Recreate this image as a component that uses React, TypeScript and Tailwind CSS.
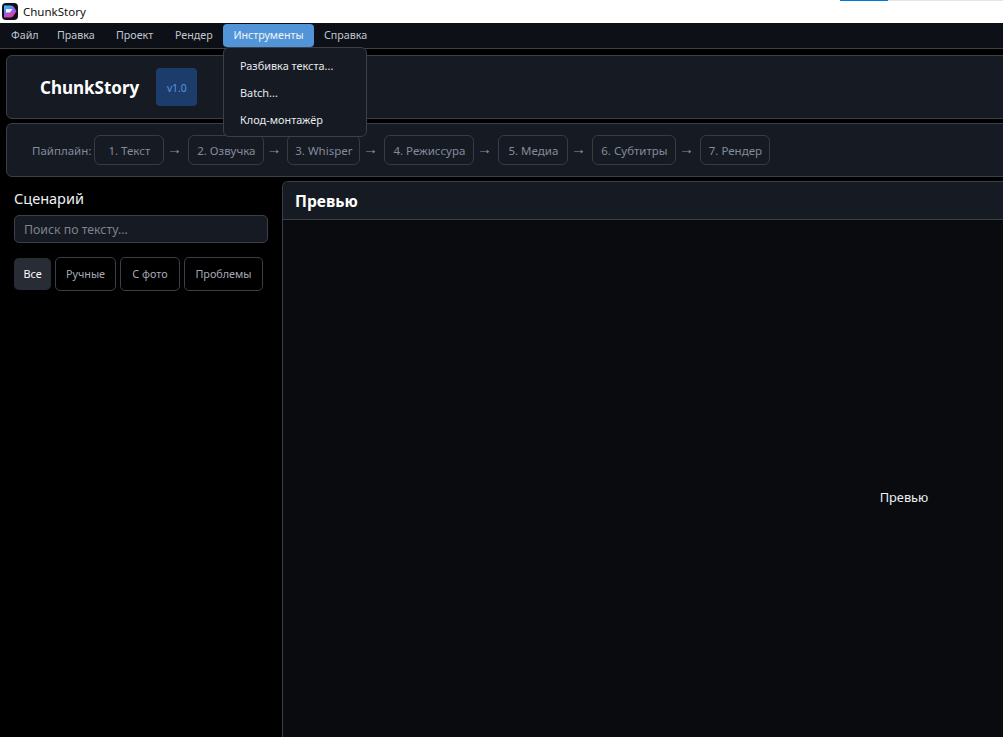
import React from "react";

const menus = [
  { label: "Файл", width: "w-[46px]" },
  { label: "Правка", width: "w-[59px]" },
  { label: "Проект", width: "w-[59px]" },
  { label: "Рендер", width: "w-[58px]" },
];
const steps = ["1. Текст", "2. Озвучка", "3. Whisper", "4. Режиссура", "5. Медиа", "6. Субтитры", "7. Рендер"];
const stepWidths = ["w-[70px]", "w-[76px]", "w-[73px]", "w-[90px]", "w-[70px]", "w-[84px]", "w-[70px]"];
const arrowWidths = ["w-[24px]", "w-[23px]", "w-[24px]", "w-[24px]", "w-[24px]", "w-[24px]"];

function Logo() {
  return (
    <svg width="16" height="17" viewBox="0 0 16 17" className="shrink-0">
      <defs>
        <linearGradient id="lg" x1="0" y1="0" x2="0.5" y2="1">
          <stop offset="0" stopColor="#22d3ee" />
          <stop offset="0.5" stopColor="#7c6cf5" />
          <stop offset="1" stopColor="#f0369a" />
        </linearGradient>
      </defs>
      <rect x="0" y="0" width="16" height="17" rx="4" fill="#0f111a" />
      <path d="M2 2.5h6.5c1.7 0 2.9.8 3.8 2.1l2.2 3.7-2.7 4c-.9 1.4-2.1 2.2-3.6 2.2H2z" fill="url(#lg)" />
      <path d="M4 6h6.5l-2.5 3.4H4z" fill="#e8f6ff" />
    </svg>
  );
}

export default function App() {
  return (
    <div className="relative w-[1003px] h-[737px] overflow-hidden bg-black font-['Noto_Sans','Open_Sans',sans-serif]">
      <div className="absolute top-0 left-[840px] w-[48px] h-px bg-[#0078d7]" />
      <div className="absolute top-0 left-[888px] w-[115px] h-px bg-[#e5e5e5]" />
      <div className="w-[1532px] h-[776px] flex flex-col">
        <div className="h-[23px] bg-white flex items-center pl-[2px] gap-[5px] text-[11.5px] text-[#111]">
          <Logo />
          <span>ChunkStory</span>
        </div>

        <div className="relative h-[26px] bg-[#0d1017] border-b border-[#3a3f48] flex items-center pl-px pb-px text-[10.7px] text-[#c0c6d0]">
          {menus.map((m) => (
            <span key={m.label} className={`${m.width} pl-[10px] flex items-center`}>
              {m.label}
            </span>
          ))}
          <span className="w-[91px] h-[23px] mt-px rounded-[4px] bg-[#5294d8] text-[#f0f4f8] flex items-center justify-center">
            Инструменты
          </span>
          <span className="pl-[10px] flex items-center">Справка</span>
          <div className="absolute z-10 left-[223px] top-[24px] w-[144px] h-[90px] bg-[#161a22] border border-[#3a3f48] rounded-[6px] pt-[5px] pl-[16px] text-[10.9px] text-[#e6e9ee] flex flex-col">
            <span className="h-[27px] flex items-center">Разбивка текста...</span>
            <span className="h-[27px] flex items-center">Batch...</span>
            <span className="h-[27px] flex items-center">Клод-монтажёр</span>
          </div>
        </div>

        <div className="mx-[6px] mt-[6px] h-[64px] bg-[#161a22] border border-[#3a3f48] rounded-[6px] flex items-center pl-[33px] gap-[16px]">
          <span className="text-[17px] font-bold text-white translate-y-px">ChunkStory</span>
          <span className="ml-px w-[41px] h-[38px] pt-[3px] rounded-[4px] bg-[#1c3d6b] text-[#5a95dc] text-[10.3px] flex items-center justify-center">
            v1.0
          </span>
        </div>

        <div className="mx-[6px] mt-[4px] h-[54px] bg-[#161a22] border border-[#3a3f48] rounded-[6px] flex items-center pl-[25px] text-[11.5px] text-[#838b9c]">
          <span className="mr-[3px] pt-[2px]">Пайплайн:</span>
          {steps.map((s, i) => (
            <React.Fragment key={s}>
              <span className={`${stepWidths[i]} h-[30px] pt-[2px] border border-[#363b45] rounded-[6px] flex items-center justify-center whitespace-nowrap`}>
                {s}
              </span>
              {i < steps.length - 1 && (
                <span className={`${arrowWidths[i]} text-center text-[15px] leading-none text-[#8b93a1] -translate-x-[2px] -translate-y-[2px]`}>→</span>
              )}
            </React.Fragment>
          ))}
        </div>

        <div className="flex-1 flex mt-[4px] min-h-0">
          <div className="w-[282px] shrink-0 pl-[14px] pt-[7px]">
            <div className="text-[14.5px] leading-[20px] text-[#eef0f3]">Сценарий</div>
            <div className="mt-[7px] w-[254px] h-[28px] pt-[2px] bg-[#161a22] border border-[#3a3f48] rounded-[5px] flex items-center pl-[9px] text-[12.3px] text-[#7d838d]">
              Поиск по тексту...
            </div>
            <div className="mt-[14px] flex gap-[4px] items-start text-[10.8px] text-[#a4a9b4]">
              <span className="mt-px w-[37px] h-[32px] rounded-[5px] bg-[#272c35] text-white flex items-center justify-center">Все</span>
              <span className="w-[61px] h-[34px] border border-[#3a3f48] rounded-[5px] flex items-center justify-center">Ручные</span>
              <span className="w-[60px] h-[34px] border border-[#3a3f48] rounded-[5px] flex items-center justify-center">С фото</span>
              <span className="w-[79px] h-[34px] border border-[#3a3f48] rounded-[5px] flex items-center justify-center">Проблемы</span>
            </div>
          </div>
          <div className="flex-1 flex flex-col bg-[#090b0f] border border-[#3a3f48] border-b-0 rounded-t-[6px] mr-[6px]">
            <div className="h-[38px] shrink-0 pt-[2px] bg-[#161a22] border-b border-[#3a3f48] rounded-t-[6px] flex items-center pl-[12px] text-[15.6px] font-bold text-white">
              Превью
            </div>
            <div className="flex-1 flex items-center justify-center text-[12.8px] text-[#eef0f3]">Превью</div>
          </div>
        </div>
      </div>
    </div>
  );
}
